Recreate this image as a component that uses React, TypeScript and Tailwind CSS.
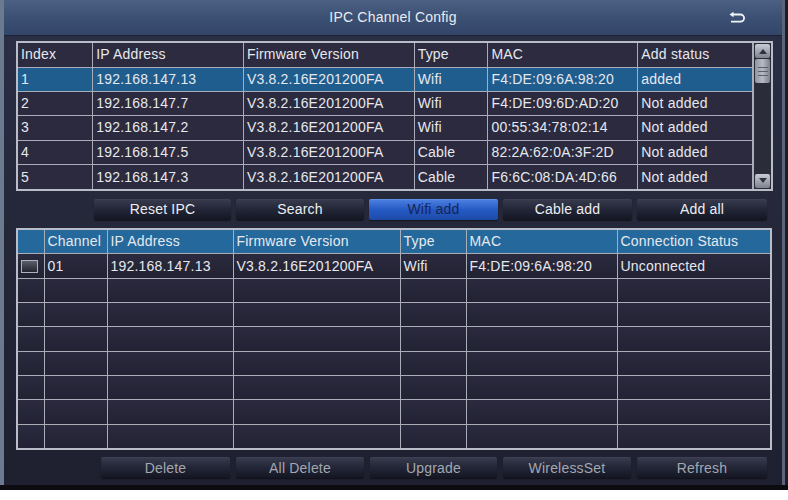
import React from "react";

type Found = { index: string; ip: string; fw: string; type: string; mac: string; status: string };

const found: Found[] = [
  { index: "1", ip: "192.168.147.13", fw: "V3.8.2.16E201200FA", type: "Wifi", mac: "F4:DE:09:6A:98:20", status: "added" },
  { index: "2", ip: "192.168.147.7", fw: "V3.8.2.16E201200FA", type: "Wifi", mac: "F4:DE:09:6D:AD:20", status: "Not added" },
  { index: "3", ip: "192.168.147.2", fw: "V3.8.2.16E201200FA", type: "Wifi", mac: "00:55:34:78:02:14", status: "Not added" },
  { index: "4", ip: "192.168.147.5", fw: "V3.8.2.16E201200FA", type: "Cable", mac: "82:2A:62:0A:3F:2D", status: "Not added" },
  { index: "5", ip: "192.168.147.3", fw: "V3.8.2.16E201200FA", type: "Cable", mac: "F6:6C:08:DA:4D:66", status: "Not added" },
];

const topCols = [75, 151, 171, 74, 150, 115];
const bottomCols = [26, 63, 126, 167, 66, 151, 153];

const cell = "border border-[#a9adb8] px-[3px] text-left font-normal whitespace-nowrap overflow-hidden";

function BackIcon() {
  return (
    <svg width="18" height="14" viewBox="0 0 18 14" fill="none">
      <path d="M5 3.5H12.5a3.6 3.6 0 0 1 0 7.2H3" stroke="#f2f4f8" strokeWidth="1.8" />
      <path d="M1.5 3.5L5.5 0.8V6.2Z" fill="#f2f4f8" />
    </svg>
  );
}

function ScrollBar() {
  return (
    <div className="flex w-[18px] flex-col border-l border-[#a9adb8] bg-[#2a2c3a] p-[1px]">
      <div className="flex h-[14px] items-center justify-center rounded-[2px] bg-gradient-to-b from-[#c8ccd4] to-[#7c828e]">
        <svg width="8" height="5" viewBox="0 0 8 5">
          <path d="M0 5L4 0L8 5Z" fill="#2c3040" />
        </svg>
      </div>
      <div className="mt-[1px] flex h-[24px] flex-col items-center justify-center gap-[3px] rounded-[2px] bg-gradient-to-r from-[#8e94a0] via-[#b6bac4] to-[#7a808c]">
        <div className="h-[1px] w-[10px] bg-[#5a606c]" />
        <div className="h-[1px] w-[10px] bg-[#5a606c]" />
        <div className="h-[1px] w-[10px] bg-[#5a606c]" />
      </div>
      <div className="flex-1" />
      <div className="flex h-[14px] items-center justify-center rounded-[2px] bg-gradient-to-b from-[#c8ccd4] to-[#7c828e]">
        <svg width="8" height="5" viewBox="0 0 8 5">
          <path d="M0 0L4 5L8 0Z" fill="#2c3040" />
        </svg>
      </div>
    </div>
  );
}

function Button({ label, active, dim, width }: { label: string; active?: boolean; dim?: boolean; width: number }) {
  const look = active
    ? "bg-gradient-to-b from-[#4a7ee0] via-[#2459c4] to-[#1d4aa8] border-[#5f8ee6] text-blue-950"
    : dim
      ? "bg-gradient-to-b from-[#363a4c] via-[#222536] to-[#141622] border-[#3c4052] text-[#a3a7b0]"
      : "bg-gradient-to-b from-[#363a4c] via-[#222536] to-[#141622] border-[#3c4052] text-[#eceef2]";
  return (
    <div
      className={`flex h-[21px] items-center justify-center rounded-[2px] border-t text-[14px] tracking-[0.2px] shadow-[0_1px_1px_rgba(0,0,0,0.5)] ${look}`}
      style={{ width }}
    >
      {label}
    </div>
  );
}

export default function App() {
  return (
    <div className="h-[500px] w-[788px] bg-white font-['Liberation_Sans',Arial,sans-serif]">
      <div className="flex h-[485px] border-l-4 border-r-[3px] border-l-[#6c7a90] border-r-[#1a1c26] bg-gradient-to-b from-[#2b3048] via-[#242738] to-[#1e2030]">
        <div className="flex flex-1 flex-col border-r-[3px] border-[#5b6478]">
          <div className="relative flex h-[36px] items-center justify-center border-b border-[#1c2234] bg-gradient-to-b from-[#4b6082] via-[#3b5072] to-[#33466a] text-[14px] tracking-[0.2px] text-[#e9ecf2]">
            IPC Channel Config
            <div className="absolute right-[36px] top-[11px]">
              <BackIcon />
            </div>
          </div>

          <div className="ml-[12px] mt-[5px] flex w-[757px] border-2 border-[#b9bdc7]">
            <table className="flex-1 table-fixed border-collapse text-[14px] tracking-[0.2px] text-[#e6e8ee]">
              <colgroup>
                {topCols.map((w, i) => (
                  <col key={i} style={{ width: w }} />
                ))}
              </colgroup>
              <thead>
                <tr className="h-[24px] bg-[#2c2b3f]">
                  {["Index", "IP Address", "Firmware Version", "Type", "MAC", "Add status"].map((h) => (
                    <th key={h} className={`${cell} border-t-0 first:border-l-0`}>
                      {h}
                    </th>
                  ))}
                </tr>
              </thead>
              <tbody>
                {found.map((r, i) => (
                  <tr key={r.index} className={`h-[24.4px] ${i === 0 ? "bg-[#1f5d8f]" : "bg-[#2b2a3e]"}`}>
                    {[r.index, r.ip, r.fw, r.type, r.mac, r.status].map((v, j) => (
                      <td key={j} className={`${cell} ${j === 0 ? "border-l-0" : ""} ${i === found.length - 1 ? "border-b-0" : ""}`}>
                        {v}
                      </td>
                    ))}
                  </tr>
                ))}
              </tbody>
            </table>
            <ScrollBar />
          </div>

          <div className="ml-[90px] mt-[8px] flex gap-[5px]">
            <Button label="Reset IPC" width={137} />
            <Button label="Search" width={128} />
            <Button label="Wifi add" width={129} active />
            <Button label="Cable add" width={129} />
            <Button label="Add all" width={130} />
          </div>

          <div className="ml-[12px] mt-[8px] w-[756px] border-2 border-[#b9bdc7]">
            <table className="w-full table-fixed border-collapse text-[14px] tracking-[0.2px] text-[#e6e8ee]">
              <colgroup>
                {bottomCols.map((w, i) => (
                  <col key={i} style={{ width: w }} />
                ))}
              </colgroup>
              <thead>
                <tr className="h-[24px] bg-[#24689c]">
                  {["", "Channel", "IP Address", "Firmware Version", "Type", "MAC", "Connection Status"].map((h, j) => (
                    <th key={j} className={`${cell} border-t-0 ${j === 0 ? "border-l-0" : ""} ${j === 6 ? "border-r-0" : ""}`}>
                      {h}
                    </th>
                  ))}
                </tr>
              </thead>
              <tbody>
                {Array.from({ length: 8 }).map((_, i) => {
                  const vals = i === 0 ? ["", "01", "192.168.147.13", "V3.8.2.16E201200FA", "Wifi", "F4:DE:09:6A:98:20", "Unconnected"] : ["", "", "", "", "", "", ""];
                  return (
                    <tr key={i} className="h-[24.3px] bg-gradient-to-b from-[#2b2a3e] to-[#222234]">
                      {vals.map((v, j) => (
                        <td key={j} className={`${cell} ${j === 0 ? "border-l-0" : ""} ${j === 6 ? "border-r-0" : ""} ${i === 7 ? "border-b-0" : ""}`}>
                          {i === 0 && j === 0 ? (
                            <div className="h-[13px] w-[17px] border border-[#aeb2bc] bg-gradient-to-b from-[#5c606c] to-[#23252e]" />
                          ) : (
                            v
                          )}
                        </td>
                      ))}
                    </tr>
                  );
                })}
              </tbody>
            </table>
          </div>

          <div className="ml-[97px] mt-[7px] flex gap-[6px]">
            <Button label="Delete" width={129} dim />
            <Button label="All Delete" width={128} dim />
            <Button label="Upgrade" width={127} dim />
            <Button label="WirelessSet" width={128} dim />
            <Button label="Refresh" width={130} dim />
          </div>
        </div>
      </div>
      <div className="h-[5px] bg-[#0c0c10]" />
    </div>
  );
}
